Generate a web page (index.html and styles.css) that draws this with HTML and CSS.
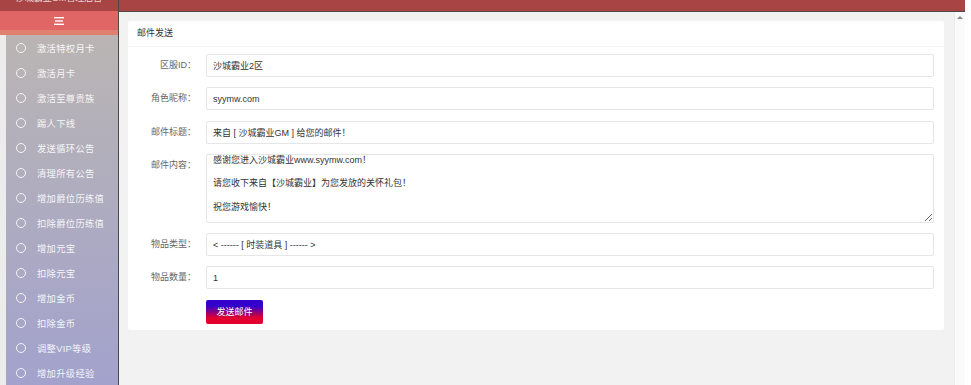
FILE: index.html
```html
<!DOCTYPE html>
<html lang="zh">
<head>
    <meta charset="UTF-8">
    <title>邮件发送</title>
    <link rel="stylesheet" href="styles.css">
</head>
<body>
<div class="app">
    <aside class="side">
        <div class="logo"><span>沙城霸业GM管理后台</span></div>
        <div class="toggle">
            <svg width="10" height="8" viewBox="0 0 10 8"><rect x="0" y="0" width="10" height="1.4" fill="#fff"/><rect x="1" y="3.3" width="8" height="1.4" fill="#fff"/><rect x="0" y="6.6" width="10" height="1.4" fill="#fff"/></svg>
        </div>
        <div class="stripe"></div>
        <ul class="menu">
            <li><i></i>激活特权月卡</li>
            <li><i></i>激活月卡</li>
            <li><i></i>激活至尊贵族</li>
            <li><i></i>踢人下线</li>
            <li><i></i>发送循环公告</li>
            <li><i></i>清理所有公告</li>
            <li><i></i>增加爵位历练值</li>
            <li><i></i>扣除爵位历练值</li>
            <li><i></i>增加元宝</li>
            <li><i></i>扣除元宝</li>
            <li><i></i>增加金币</li>
            <li><i></i>扣除金币</li>
            <li><i></i>调整VIP等级</li>
            <li><i></i>增加升级经验</li>
        </ul>
    </aside>
    <main class="main">
        <div class="topbar"></div>
        <div class="frame">
            <div class="page">
                <div class="card">
                    <div class="card-head">邮件发送</div>
                    <form class="card-body">
                        <div class="row">
                            <label>区服ID：</label>
                            <input type="text" value="沙城霸业2区">
                        </div>
                        <div class="row">
                            <label>角色昵称：</label>
                            <input type="text" value="syymw.com">
                        </div>
                        <div class="row">
                            <label>邮件标题：</label>
                            <input type="text" value="来自 [ 沙城霸业GM ] 给您的邮件！">
                        </div>
                        <div class="row">
                            <label>邮件内容：</label>
                            <textarea>感谢您进入沙城霸业www.syymw.com！

请您收下来自【沙城霸业】为您发放的关怀礼包！

祝您游戏愉快！</textarea>
                        </div>
                        <div class="row">
                            <label>物品类型：</label>
                            <input type="text" value="< ------ [ 时装道具 ] ------ >">
                        </div>
                        <div class="row">
                            <label>物品数量：</label>
                            <input type="text" value="1">
                        </div>
                        <div class="row">
                            <label></label>
                            <button type="button" class="send">发送邮件</button>
                        </div>
                    </form>
                </div>
            </div>
            <div class="scrollbar"><span class="arrow"></span></div>
        </div>
    </main>
</div>
</body>
</html>
```

FILE: styles.css
```css
body{
    margin: 0;
    padding: 0;
    background: #fff;
    font-family: "Liberation Sans", "Noto Sans CJK SC", sans-serif;
    font-size: 9px;
}
.app{
    display: flex;
    width: 965px;
    height: 385px;
    overflow: hidden;
}
.side{
    width: 118px;
    flex: none;
    display: flex;
    flex-direction: column;
    background: #ececec;
    border-right: 1px solid #4a4a4a;
}
/* title sits mostly above the visible area, only its lower edge shows */
.logo{
    height: 11px;
    overflow: hidden;
    background: #a94444;
    color: rgba(255, 255, 255, 0.8);
    text-align: center;
}
.logo span{
    display: block;
    font-size: 9px;
    line-height: 12px;
    margin-top: -8px;
}
.toggle{
    height: 19px;
    background: #e06565;
    display: flex;
    align-items: center;
    justify-content: center;
}
.stripe{
    height: 5px;
    background: #e2806f;
}
.menu{
    flex: 1;
    list-style: none;
    margin: 0 0 0 6px;
    padding: 0;
    background: linear-gradient(to bottom, #bab5b3, #a2a2cd);
}
.menu li{
    height: 25px;
    display: flex;
    align-items: center;
    color: rgba(255, 255, 255, 0.9);
    font-size: 9.3px;
    letter-spacing: 0.3px;
}
.menu li i{
    width: 8px;
    height: 8px;
    border: 1px solid rgba(255, 255, 255, 0.85);
    border-radius: 50%;
    margin: 0 11px 0 10px;
}
.main{
    flex: 1;
    display: flex;
    flex-direction: column;
}
.topbar{
    height: 11px;
    background: #a94444;
    border-bottom: 1px solid #4a4a4a;
}
.frame{
    flex: 1;
    display: flex;
}
.page{
    flex: 1;
    background: #f2f2f2;
    padding: 9px 10px 0 9px;
}
.scrollbar{
    width: 10px;
    background: #fafafa;
    border-left: 1px solid #ececec;
    display: flex;
    justify-content: center;
    padding-top: 4px;
}
.arrow{
    width: 0;
    height: 0;
    border-left: 3px solid transparent;
    border-right: 3px solid transparent;
    border-bottom: 3px solid #888;
}
.card{
    background: #fff;
    border-radius: 2px;
}
.card-head{
    height: 25px;
    line-height: 25px;
    padding-left: 9px;
    color: #333;
    border-bottom: 1px solid #f4f4f4;
}
.card-body{
    margin: 0;
    padding: 7px 10px 6px 0;
    display: flex;
    flex-direction: column;
    gap: 10.3px;
}
.row{
    display: flex;
    align-items: flex-start;
}
.row label{
    width: 68px;
    flex: none;
    padding-right: 10px;
    text-align: right;
    line-height: 23px;
    color: #666;
}
.row input{
    flex: 1;
    height: 23px;
    box-sizing: border-box;
    border: 1px solid #e6e6e6;
    border-radius: 2px;
    padding: 0 6px;
    font: inherit;
    color: #333;
    outline: none;
}
.row textarea{
    flex: 1;
    height: 69px;
    box-sizing: border-box;
    border: 1px solid #e6e6e6;
    border-radius: 2px;
    padding: 0 6px;
    font: inherit;
    line-height: 11.8px;
    color: #333;
    outline: none;
}
.send{
    width: 57px;
    height: 24px;
    border: none;
    border-radius: 2px;
    background: linear-gradient(to bottom, #3300cc 25%, #e2002e 75%);
    color: #fff;
    font: inherit;
    cursor: pointer;
}
```
